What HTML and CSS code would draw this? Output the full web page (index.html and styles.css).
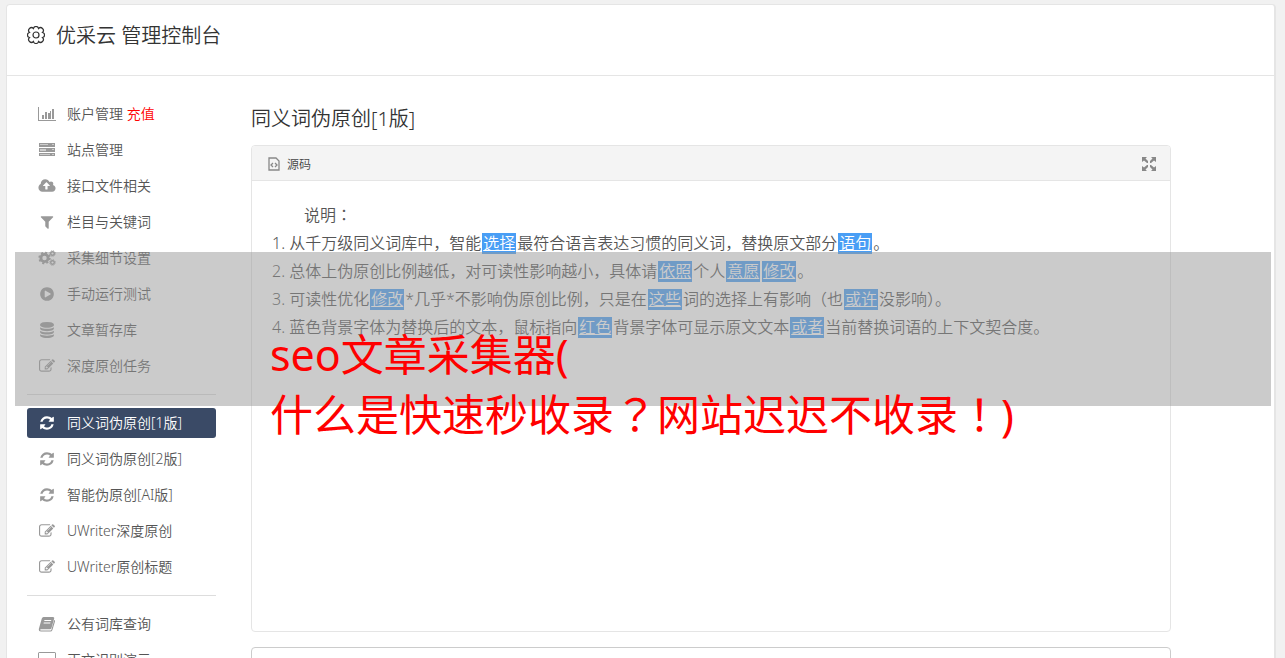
FILE: index.html
```html
<!DOCTYPE html>
<html lang="zh-CN">
<head>
  <meta charset="UTF-8">
  <meta name="viewport" content="width=device-width, initial-scale=1.0">
  <title>优采云 管理控制台</title>
  <link rel="stylesheet" href="styles.css">
</head>
<body>
  <!-- Shared icons -->
  <svg class="icon-defs" aria-hidden="true">
    <symbol id="icon-refresh" viewBox="0 0 1792 1792"><path d="M1639 1056q0 5-1 7-64 268-268 434.5t-478 166.5q-146 0-282.5-55t-243.5-157l-129 129q-19 19-45 19t-45-19-19-45v-448q0-26 19-45t45-19h448q26 0 45 19t19 45-19 45l-137 137q71 66 161 102t187 36q134 0 250-65t186-179q11-17 53-117 8-23 30-23h192q13 0 22.5 9.5t9.5 22.5zm25-800v448q0 26-19 45t-45 19h-448q-26 0-45-19t-19-45 19-45l138-138q-148-137-349-137-134 0-250 65t-186 179q-11 17-53 117-8 23-30 23h-199q-13 0-22.5-9.5t-9.5-22.5v-7q65-268 270-434.5t480-166.5q146 0 284 55.5t245 156.5l130-129q19-19 45-19t45 19 19 45z"/></symbol>
    <symbol id="icon-edit" viewBox="0 0 1792 1792"><path d="M888 1184l116-116-152-152-116 116v56h96v96h56zm440-720q-16-16-33 1l-350 350q-17 17-1 33t33-1l350-350q17-17 1-33zm80 594v190q0 119-84.5 203.5t-203.5 84.5h-832q-119 0-203.5-84.5t-84.5-203.5v-832q0-119 84.5-203.5t203.5-84.5h832q63 0 117 25 15 7 18 23 3 17-9 29l-49 49q-14 14-32 8-23-6-45-6h-832q-66 0-113 47t-47 113v832q0 66 47 113t113 47h832q66 0 113-47t47-113v-126q0-13 9-22l64-64q15-15 35-7t20 29zm-96-738l288 288-672 672h-288v-288zm444 132l-92 92-288-288 92-92q28-28 68-28t68 28l152 152q28 28 28 68t-28 68z"/></symbol>
  </svg>

  <div class="console">
    <header class="console-header">
      <svg class="gear" viewBox="0 0 18 18"><path d="M6.500 2.500A2.550 2.550 0 0 1 11.500 2.500A2.550 2.550 0 0 1 15.500 6.500A2.550 2.550 0 0 1 15.500 11.500A2.550 2.550 0 0 1 11.500 15.500A2.550 2.550 0 0 1 6.500 15.500A2.550 2.550 0 0 1 2.500 11.500A2.550 2.550 0 0 1 2.500 6.500A2.550 2.550 0 0 1 6.500 2.500Z"/><circle cx="9" cy="9" r="3"/></svg>
      <h1>优采云 管理控制台</h1>
    </header>

    <div class="console-body">
      <nav class="sidebar">
        <ul>
          <li><a href="#"><svg viewBox="0 0 18 16"><path d="M0 1h1v13h17v1H0zM4 9h2v4H4zM7 6h2v7H7zM10 7h2v6h-2zM12 5h1v8h-1zM14 3h2v10h-2z"/></svg><span>账户管理 <em class="recharge">充值</em></span></a></li>
          <li><a href="#"><svg viewBox="0 0 18 16"><path d="M1 1h16v4H1zM1 6h16v4H1zM1 11h16v3H1z"/><path class="slot" d="M2 2h8v1H2zM14 2h2v1h-2zM2 7h6v2H2zM14 7h2v1h-2zM2 12h10v1H2zM14 12h2v1h-2z"/></svg><span>站点管理</span></a></li>
          <li><a href="#"><svg viewBox="-64 0 1920 1792"><path d="M1216 864q0-14-9-23l-352-352q-9-9-23-9t-23 9l-351 351q-10 12-10 24 0 14 9 23t23 9h224v352q0 13 9.5 22.5t22.5 9.5h192q13 0 22.5-9.5t9.5-22.5v-352h224q13 0 22.5-9.5t9.5-22.5zm640 288q0 159-112.5 271.5t-271.5 112.5h-1088q-185 0-316.5-131.5t-131.5-316.5q0-130 70-240t188-165q-2-30-2-43 0-212 150-362t362-150q156 0 285.5 87t188.5 231q71-62 166-62 106 0 181 75t75 181q0 76-41 138 130 31 213.5 135.5t83.5 238.5z"/></svg><span>接口文件相关</span></a></li>
          <li><a href="#"><svg viewBox="0 0 1792 1792"><path d="M1595 295q17 41-14 70l-493 493v742q0 42-39 59-13 5-25 5-27 0-45-19l-256-256q-19-19-19-45v-486l-493-493q-31-29-14-70 17-39 59-39h1280q42 0 59 39z"/></svg><span>栏目与关键词</span></a></li>
          <li><a href="#"><svg class="cogs" viewBox="0 0 18 16"><circle cx="6.5" cy="8" r="3.6" stroke-width="2.8"/><circle cx="6.5" cy="8" r="5.3" stroke-width="1.8" stroke-dasharray="2.08"/><circle cx="14.5" cy="3.5" r="1.8" stroke-width="1.4"/><circle cx="14.5" cy="3.5" r="2.8" stroke-width="1" stroke-dasharray="1.1"/><circle cx="14.5" cy="12.5" r="1.8" stroke-width="1.4"/><circle cx="14.5" cy="12.5" r="2.8" stroke-width="1" stroke-dasharray="1.1"/></svg><span>采集细节设置</span></a></li>
          <li><a href="#"><svg viewBox="0 0 1792 1792"><path d="M896 128q209 0 385.5 103t279.5 279.5 103 385.5-103 385.5-279.5 279.5-385.5 103-385.5-103-279.5-279.5-103-385.5 103-385.5 279.5-279.5 385.5-103zm384 823q32-18 32-55t-32-55l-544-320q-31-19-64-1-32 19-32 56v640q0 37 32 56 16 8 32 8 17 0 32-9z"/></svg><span>手动运行测试</span></a></li>
          <li><a href="#"><svg viewBox="0 0 1792 1792"><path d="M896 768q237 0 443-43t325-127v170q0 69-103 128t-280 93.5-385 34.5-385-34.5-280-93.5-103-128v-170q119 84 325 127t443 43zm0 768q237 0 443-43t325-127v170q0 69-103 128t-280 93.5-385 34.5-385-34.5-280-93.5-103-128v-170q119 84 325 127t443 43zm0-384q237 0 443-43t325-127v170q0 69-103 128t-280 93.5-385 34.5-385-34.5-280-93.5-103-128v-170q119 84 325 127t443 43zm0-1152q208 0 385 34.5t280 93.5 103 128v128q0 69-103 128t-280 93.5-385 34.5-385-34.5-280-93.5-103-128v-128q0-69 103-128t280-93.5 385-34.5z"/></svg><span>文章暂存库</span></a></li>
          <li><a href="#"><svg><use href="#icon-edit"/></svg><span>深度原创任务</span></a></li>
        </ul>
        <hr>
        <ul>
          <li><a href="#" class="active"><svg><use href="#icon-refresh"/></svg><span>同义词伪原创[1版]</span></a></li>
          <li><a href="#"><svg><use href="#icon-refresh"/></svg><span>同义词伪原创[2版]</span></a></li>
          <li><a href="#"><svg><use href="#icon-refresh"/></svg><span>智能伪原创[AI版]</span></a></li>
          <li><a href="#"><svg><use href="#icon-edit"/></svg><span>UWriter深度原创</span></a></li>
          <li><a href="#"><svg><use href="#icon-edit"/></svg><span>UWriter原创标题</span></a></li>
        </ul>
        <hr>
        <ul>
          <li><a href="#"><svg viewBox="0 0 18 16"><path fill-rule="evenodd" d="M5.5 1H15q1.600 0 1.200 1.500L13.500 12q-.4 1.300-1.700 1.300H3q-1 0-.8.6.2.500 1 .5h9.300q.7 0 .9-.7L16.200 4q1.200.4.800 1.600L14.400 14q-.5 1.500-2 1.500H3q-2.400 0-2.200-2.500L3.800 2.500Q4.300 1 5.500 1zM6.500 4l-.3 1H13l.3-1zM5.800 6.500l-.3 1h6.700l.3-1z"/></svg><span>公有词库查询</span></a></li>
          <li><a href="#"><svg viewBox="0 0 18 16"><path fill-rule="evenodd" d="M1.500 0h15Q18 0 18 1.500v10q0 1.500-1.500 1.500H11v2h2v1H5v-1h2v-2H1.500Q0 13 0 11.500v-10Q0 0 1.500 0zM1 1v9h16V1z"/></svg><span>正文识别演示</span></a></li>
        </ul>
      </nav>

      <main class="content">
        <h2>同义词伪原创[1版]</h2>
        <section class="editor">
          <div class="toolbar">
            <button type="button" class="source-btn">
              <svg viewBox="0 0 12 14"><path d="M1 1h7l3 3v9H1z"/><path d="M5 6L3 8l2 2M7 6l2 2-2 2"/></svg>
              源码
            </button>
            <button type="button" class="fullscreen-btn" aria-label="全屏">
              <svg viewBox="0 0 14 14"><path d="M0 0h5L3.500 1.500 6 4v2H5L2 3.500 0 5zM14 0v5l-2-1.500L9 6H8V4l2.500-2.500L9 0zM0 14V9l2 1.500L5 8h1v2l-2.500 2.500L5 14zM14 14H9l1.500-1.500L8 10V8h1l3 2.500L14 9z"/></svg>
            </button>
          </div>
          <div class="editor-text">
            <p class="note">说明<span class="mark" lang="ja">：</span></p>
            <p>1. 从千万级同义词库中，智能<a href="#">选择</a>最符合语言表达习惯的同义词，替换原文部分<a href="#">语句</a>。</p>
            <p>2. 总体上伪原创比例越低，对可读性影响越小，具体请<a href="#">依照</a>个人<a href="#">意愿</a><a href="#">修改</a>。</p>
            <p>3. 可读性优化<a href="#">修改</a>*几乎*不影响伪原创比例，只是在<a href="#">这些</a>词的选择上有影响（也<a href="#">或许</a>没影响）。</p>
            <p>4. 蓝色背景字体为替换后的文本，鼠标指向<a href="#">红色</a>背景字体可显示原文文本<a href="#">或者</a>当前替换词语的上下文契合度。</p>
          </div>
        </section>
        <textarea class="result" aria-label="结果"></textarea>
      </main>
    </div>
  </div>

  <!-- Caption band over the page -->
  <div class="caption">
    <p>seo文章采集器(</p>
    <p>什么是快速秒收录<span class="mark" lang="ja">？</span>网站迟迟不收录<span class="mark" lang="ja">！</span>)</p>
  </div>
</body>
</html>
```
FILE: styles.css
```css
* {
  box-sizing: border-box;
}

body {
  margin: 0;
  padding: 4px 9px 0 6px;
  position: relative;
  background-color: #f1f1f1;
  font-family: "Noto Sans", "Noto Sans CJK SC", sans-serif;
  font-size: 14px;
  font-weight: 350;
  color: #555;
}

h1, h2, p, ul {
  margin: 0;
  padding: 0;
  font-weight: inherit;
}

.icon-defs {
  position: absolute;
  width: 0;
  height: 0;
}

.console {
  background: #fff;
  border: 1px solid #e5e5e5;
  border-right-width: 2px;
  border-radius: 4px;
}

/* Header */
.console-header {
  display: flex;
  align-items: flex-start;
  gap: 11px;
  height: 71px;
  padding: 16px 20px;
  border-bottom: 1px solid #e5e5e5;
  color: #333;
}

.console-header h1 {
  font-size: 20px;
  line-height: 30px;
}

.gear {
  width: 18px;
  height: 18px;
  margin-top: 5px;
  fill: none;
  stroke: #333;
  stroke-width: 1.2;
}

.console-body {
  display: flex;
  gap: 35px;
  padding: 23px 103px 20px 20px;
}

/* Sidebar */
.sidebar {
  width: 189px;
  flex-shrink: 0;
}

.sidebar ul {
  display: flex;
  flex-direction: column;
  gap: 6px;
  list-style: none;
}

.sidebar a {
  display: flex;
  align-items: center;
  gap: 11px;
  height: 30px;
  padding: 0 11px;
  border-radius: 3px;
  line-height: 28px;
  color: #555;
  text-decoration: none;
}

.sidebar svg {
  width: 18px;
  height: 16px;
  fill: #999;
}

.sidebar .cogs {
  fill: none;
  stroke: #999;
}

.sidebar .slot {
  fill: #ccc;
}

.sidebar a.active {
  background: #3a4a66;
  color: #fff;
}

.sidebar a.active svg {
  fill: #fff;
}

.sidebar hr {
  margin: 13px 0;
  border: 0;
  border-top: 1px solid #ddd;
}

.recharge {
  color: #f00;
  font-style: normal;
}

/* Content */
.content {
  flex: 1;
  min-width: 0;
}

.content h2 {
  margin: 5px 0 11px;
  font-size: 20px;
  line-height: 30px;
  color: #333;
}

.editor {
  border: 1px solid #e5e5e5;
  border-radius: 4px;
}

.toolbar {
  display: flex;
  justify-content: space-between;
  align-items: center;
  height: 35px;
  padding: 2px 14px 0 16px;
  background: #f4f4f4;
  border-bottom: 1px solid #e5e5e5;
  border-radius: 3px 3px 0 0;
}

.toolbar button {
  display: flex;
  align-items: center;
  gap: 7px;
  padding: 0;
  border: 0;
  background: none;
  font-family: inherit;
  font-size: 12px;
  font-weight: inherit;
  color: #444;
  cursor: pointer;
}

.source-btn svg {
  width: 12px;
  height: 14px;
  fill: none;
  stroke: #888;
  stroke-width: 1.3;
}

.fullscreen-btn svg {
  width: 14px;
  height: 14px;
  fill: #888;
}

.editor-text {
  min-height: 450px;
  padding: 20px;
  font-size: 16px;
  line-height: 28px;
}

.editor-text .note {
  text-indent: 2em;
}

.editor-text a {
  display: inline-block;
  margin: 0 1px;
  padding: 0 1px;
  line-height: 21px;
  background: #499ef5;
  color: #fff;
}

.result {
  display: block;
  width: 100%;
  height: 300px;
  margin-top: 15px;
  border: 1px solid #ccc;
  border-radius: 4px;
  resize: none;
}

/* Caption */
.caption {
  position: absolute;
  top: 252px;
  left: 15px;
  right: 14px;
  height: 154px;
  padding: 73px 0 0 255px;
  background: rgba(151, 151, 151, 0.5);
  font-size: 43px;
  font-weight: 400;
  line-height: 60px;
  color: #f00;
  white-space: nowrap;
  pointer-events: none;
}

.mark {
  font-family: "Noto Sans CJK JP", sans-serif;
  line-height: 1;
}
```
